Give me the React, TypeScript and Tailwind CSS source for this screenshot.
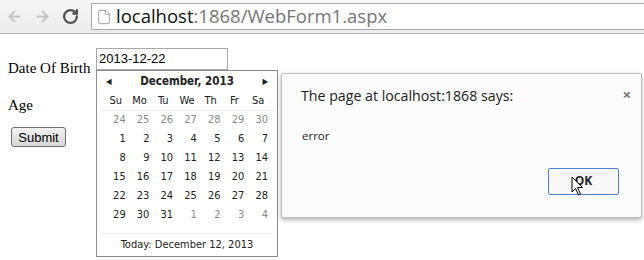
import { ArrowLeft, ArrowRight, RotateCw, File } from 'lucide-react';

const weeks: [number, boolean][][] = [
  [[24, false], [25, false], [26, false], [27, false], [28, false], [29, false], [30, false]],
  [[1, true], [2, true], [3, true], [4, true], [5, true], [6, true], [7, true]],
  [[8, true], [9, true], [10, true], [11, true], [12, true], [13, true], [14, true]],
  [[15, true], [16, true], [17, true], [18, true], [19, true], [20, true], [21, true]],
  [[22, true], [23, true], [24, true], [25, true], [26, true], [27, true], [28, true]],
  [[29, true], [30, true], [31, true], [1, false], [2, false], [3, false], [4, false]],
];

const dayNames = ['Su', 'Mo', 'Tu', 'We', 'Th', 'Fr', 'Sa'];

const calFont = { fontFamily: '"DejaVu Sans Condensed", "Liberation Sans", sans-serif' };

function Calendar() {
  return (
    <div
      className="absolute left-[96px] top-[70px] w-[182px] border border-[#8c8c8c] bg-white text-[11px] text-[#222]"
      style={calFont}
    >
      {/* mês */}
      <div className="flex h-[21px] items-center justify-between px-[9px]">
        <span className="text-[8px] text-[#222]">◀</span>
        <span className="font-bold text-[11.5px]">December, 2013</span>
        <span className="text-[8px] text-[#222]">▶</span>
      </div>
      <div className="grid h-[18px] grid-cols-7 items-center px-[7px]">
        {dayNames.map((d) => (
          <span key={d} className="text-center">{d}</span>
        ))}
      </div>
      <div className="mx-[4px] h-px bg-[#ececec]" />
      <div className="px-[7px]">
        {weeks.map((w, i) => (
          <div key={i} className="grid h-[19px] grid-cols-7 items-center">
            {w.map(([n, cur], j) => (
              <span key={j} className={`pr-[2px] text-right ${cur ? 'text-[#222]' : 'text-[#8a8a8a]'}`}>
                {n}
              </span>
            ))}
          </div>
        ))}
      </div>
      <div className="mx-[4px] mt-[8px] h-px bg-[#ececec]" />
      <div className="flex h-[22px] items-center justify-center">Today: December 12, 2013</div>
    </div>
  );
}

function AlertDialog() {
  return (
    <div
      className="absolute left-[281px] top-[73px] h-[145px] w-[361px] rounded-[2px] border border-[#bdbdbd] bg-[#fbfbfb] shadow-[0_2px_4px_rgba(0,0,0,0.3)]"
      style={{ fontFamily: '"Open Sans", "Noto Sans", sans-serif' }}
    >
      <div className="flex items-start justify-between pl-[19px] pr-[10px] pt-[11px]">
        <span className="text-[14.2px] text-[#222]">The page at localhost:1868 says:</span>
        <span className="mt-[-2px] text-[15px] font-bold text-[#777]">×</span>
      </div>
      <div className="pl-[20px] pt-[21px] text-[11.5px] text-[#222]">error</div>
      <div className="flex justify-end pr-[22px] pt-[23px]">
        <div className="relative flex h-[27px] w-[71px] items-center justify-center rounded-[2px] border border-[#4a7fd8] bg-[#f8f8f8] text-[12px] font-bold text-[#222]">
          OK
          <svg className="absolute left-[22px] top-[7px]" width="13" height="20" viewBox="0 0 13 20">
            <path d="M1 1 L1 16 L4.5 12.5 L7.5 19 L9.5 18 L6.5 11.5 L11.5 11.5 Z" fill="#fff" stroke="#000" strokeWidth="1" strokeLinejoin="round" />
          </svg>
        </div>
      </div>
    </div>
  );
}

export default function App() {
  return (
    <div className="relative h-[260px] w-[644px] overflow-hidden bg-white">
      {/* barra do navegador */}
      <div className="flex h-[34px] items-center border-b border-[#b4b4b4] bg-gradient-to-b from-[#f6f6f6] to-[#ececec]">
        <div className="flex w-[91px] items-center pl-[6px]">
          <ArrowLeft size={17} strokeWidth={2.5} className="text-[#c2c2c2]" />
          <ArrowRight size={17} strokeWidth={2.5} className="ml-[11px] text-[#c2c2c2]" />
          <RotateCw size={17} strokeWidth={3.2} className="ml-[11px] text-[#505050]" />
        </div>
        <div className="flex h-[27px] flex-1 items-center rounded-l-[2px] border border-r-0 border-[#a8a8a8] bg-white pl-[4px]">
          <File size={16} strokeWidth={1.2} className="text-[#888]" />
          <span className="ml-[4px] text-[18.5px] leading-none" style={{ fontFamily: '"Open Sans", sans-serif' }}>
            <span className="text-[#111]">localhost</span>
            <span className="text-[#777]">:1868/WebForm1.aspx</span>
          </span>
        </div>
      </div>

      {/* formulário */}
      <div className="px-[8px] pt-[14px] text-[15px] text-black" style={{ fontFamily: '"Liberation Serif", serif' }}>
        <div className="flex items-start">
          <span className="mt-[11px] w-[88px] whitespace-nowrap leading-[18px]">Date Of Birth</span>
          <div
            className="flex h-[22px] w-[132px] items-center border border-[#a9a9a9] pl-[2px] text-[13px]"
            style={{ fontFamily: '"Liberation Sans", sans-serif' }}
          >
            2013-12-22
          </div>
        </div>
        <div className="mt-[19px] leading-[18px]">Age</div>
        <button
          className="ml-[3px] mt-[13px] h-[20px] w-[55px] rounded-[3px] border border-[#707070] bg-gradient-to-b from-[#f2f2f2] to-[#d8d8d8] text-[13px]"
          style={{ fontFamily: '"Liberation Sans", sans-serif' }}
        >
          Submit
        </button>
      </div>

      <Calendar />
      <AlertDialog />
    </div>
  );
}
